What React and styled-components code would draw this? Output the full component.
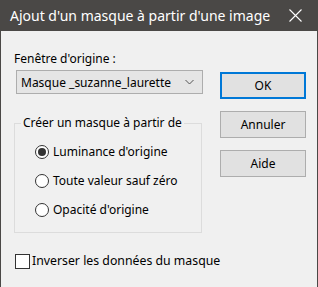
import React, { useState } from 'react';
import styled, { createGlobalStyle } from 'styled-components';

const Global = createGlobalStyle`
  html, body { margin: 0; padding: 0; background: #f0f0f0; }
  body { font-family: "Noto Sans", "Open Sans", sans-serif; }
`;

const Window = styled.div`
  width: 318px;
  height: 287px;
  box-sizing: border-box;
  border-left: 1px solid #4a4846;
  border-right: 1px solid #4a4846;
  background: #f0f0f0;
  display: flex;
  flex-direction: column;
  overflow: hidden;
`;

const TitleBar = styled.div`
  height: 31px;
  flex-shrink: 0;
  background: #4a4846;
  display: flex;
  align-items: center;
  justify-content: space-between;
  padding: 0 15px 0 9px;
  color: #fff;
  font-size: 14px;
`;

const Close = styled.svg`
  width: 13px;
  height: 13px;
`;

const Body = styled.div`
  display: flex;
  padding: 20px 0 0 12px;
`;

const LeftCol = styled.div`
  width: 190px;
  display: flex;
  flex-direction: column;
`;

const Label = styled.div`
  font-size: 12px;
  color: #000;
  padding-left: 1px;
  line-height: 16px;
`;

const Select = styled.div`
  margin: 3px 0 0 3px;
  height: 24px;
  box-sizing: border-box;
  border: 1px solid #adadad;
  background: #e5e5e5;
  display: flex;
  align-items: center;
  justify-content: space-between;
  padding: 0 8px 0 4px;
  font-size: 12px;
`;

const Group = styled.fieldset`
  margin: 21px 0 0 1px;
  padding: 0;
  border: 1px solid #dcdcdc;
  width: 188px;
  height: 118px;
  box-sizing: border-box;
  min-width: 0;
`;

const Legend = styled.legend`
  font-size: 12px;
  line-height: 16px;
  padding: 0 2px;
  margin-left: 6px;
  white-space: nowrap;
`;

const Options = styled.div`
  display: flex;
  flex-direction: column;
  gap: 13px;
  padding: 13px 0 0 20px;
`;

const Option = styled.label`
  display: flex;
  align-items: center;
  font-size: 12px;
  line-height: 16px;
  gap: 4px;
`;

const Radio = styled.span`
  width: 14px;
  height: 14px;
  box-sizing: border-box;
  border: 1px solid #333;
  border-radius: 50%;
  background: #fff;
  display: flex;
  align-items: center;
  justify-content: center;
  &::after {
    content: '';
    width: 8px;
    height: 8px;
    border-radius: 50%;
    background: ${(p) => (p.checked ? '#333' : 'transparent')};
  }
`;

const RightCol = styled.div`
  margin-left: 17px;
  padding-top: 21px;
  display: flex;
  flex-direction: column;
  gap: 12px;
`;

const Button = styled.div`
  width: 86px;
  height: 27px;
  box-sizing: border-box;
  border: ${(p) => (p.primary ? '2px solid #0078d7' : '1px solid #adadad')};
  background: #e1e1e1;
  display: flex;
  align-items: center;
  justify-content: center;
  font-size: 12px;
`;

const CheckRow = styled.label`
  display: flex;
  align-items: center;
  gap: 2px;
  margin: 20px 0 0 14px;
  font-size: 12.3px;
  line-height: 16px;
`;

const Box = styled.span`
  width: 15px;
  height: 15px;
  box-sizing: border-box;
  border: 1px solid #333;
  background: #fff;
`;

const options = ["Luminance d'origine", 'Toute valeur sauf zéro', "Opacité d'origine"];

export default function App() {
  const [sel] = useState(0);
  return (
    <Window>
      <Global />
      <TitleBar>
        <span>Ajout d'un masque à partir d'une image</span>
        <Close viewBox="0 0 13 13">
          <path d="M0.5 0.5 L12.5 12.5 M12.5 0.5 L0.5 12.5" stroke="#fff" strokeWidth="1.1" />
        </Close>
      </TitleBar>
      <Body>
        <LeftCol>
          <Label>Fenêtre d'origine :</Label>
          <Select>
            <span>Masque _suzanne_laurette</span>
            <svg width="9" height="6" viewBox="0 0 9 6">
              <path d="M0.5 1 L4.5 5 L8.5 1" stroke="#555" fill="none" />
            </svg>
          </Select>
          <Group>
            <Legend>Créer un masque à partir de</Legend>
            <Options>
              {options.map((o, i) => (
                <Option key={o}>
                  <Radio checked={i === sel} />
                  {o}
                </Option>
              ))}
            </Options>
          </Group>
        </LeftCol>
        <RightCol>
          <Button primary>OK</Button>
          <Button>Annuler</Button>
          <Button>Aide</Button>
        </RightCol>
      </Body>
      <CheckRow>
        <Box />
        Inverser les données du masque
      </CheckRow>
    </Window>
  );
}
